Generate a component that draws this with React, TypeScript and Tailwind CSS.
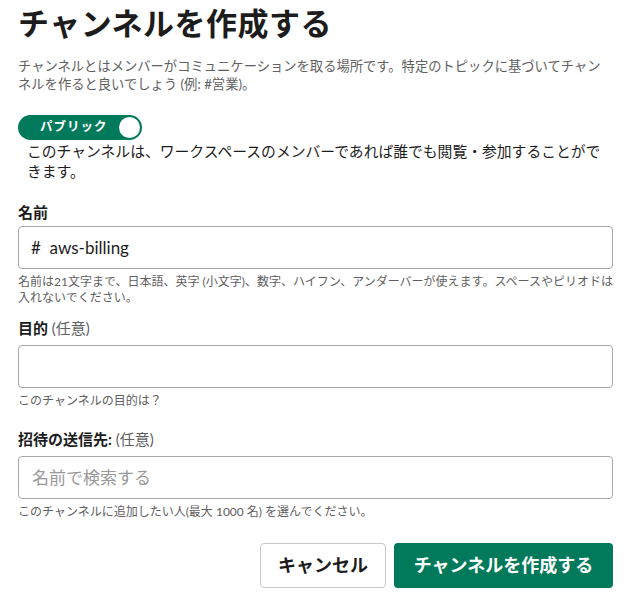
import React from "react";

const font = "font-['Lato','Noto_Sans_CJK_JP',sans-serif]";

function Field({
  label,
  optional,
  children,
  hint,
  className,
  inputGap = "mt-[3px]",
}: {
  label: string;
  optional?: boolean;
  children: React.ReactNode;
  hint: React.ReactNode;
  className?: string;
  inputGap?: string;
}) {
  return (
    <div className={className}>
      <div className="text-[15px] leading-[22px] text-[#1d1c1d]">
        <span className="font-bold">{label}</span>
        {optional && <span className="text-[#616061]"> (任意)</span>}
      </div>
      <div className={`${inputGap} h-[43px] rounded-[4px] border border-[#a8a8a8] flex items-center px-[12px] text-[17px]`}>
        {children}
      </div>
      <div className="mt-[5px] text-[12px] leading-[16px] text-[#616061]">{hint}</div>
    </div>
  );
}

export default function App() {
  return (
    <div className={`${font} w-[640px] h-[614px] bg-white text-[#1d1c1d] pl-[18px] pr-[27px] pt-[3px] overflow-hidden`}>
      {/* Title */}
      <h1 className="text-[31px] leading-[40px] font-bold tracking-[0.5px]">チャンネルを作成する</h1>

      <p className="mt-[14px] text-[13.3px] leading-[18px] text-[#616061]">
        チャンネルとはメンバーがコミュニケーションを取る場所です。特定のトピックに基づいてチャン
        <br />
        ネルを作ると良いでしょう (例: #営業)。
      </p>

      {/* Public toggle */}
      <div className="mt-[22px] w-[124px] h-[25px] rounded-full bg-[#007a5a] flex items-center justify-between pl-[22px] pr-[2px]">
        <span className="text-white text-[12.5px] font-bold tracking-[1px]">パブリック</span>
        <span className="w-[21px] h-[21px] rounded-full bg-white" />
      </div>
      <p className="mt-[1px] pl-[9px] text-[14.8px] leading-[20px] whitespace-nowrap">
        このチャンネルは、ワークスペースのメンバーであれば誰でも閲覧・参加することがで
        <br />
        きます。
      </p>

      <Field
        className="mt-[20px]"
        label="名前"
        hint={
          <>
            名前は21文字まで、日本語、英字 (小文字)、数字、ハイフン、アンダーバーが使えます。スペースやピリオドは
            <br />
            入れないでください。
          </>
        }
      >
        <span className="text-[#1d1c1d]">#&nbsp;&nbsp;aws-billing</span>
      </Field>

      <Field className="mt-[11px]" inputGap="mt-[6px]" label="目的" optional hint="このチャンネルの目的は？">
        <span />
      </Field>

      <Field
        className="mt-[19px]"
        inputGap="mt-[6px]"
        label="招待の送信先:"
        optional
        hint="このチャンネルに追加したい人(最大 1000 名) を選んでください。"
      >
        <span className="text-[#9a999a] pl-[1px]">名前で検索する</span>
      </Field>

      {/* Actions */}
      <div className="mt-[23px] flex justify-end gap-[8px]">
        <button className="w-[126px] h-[45px] rounded-[4px] border border-[#c8c8c8] bg-white text-[18px] font-bold text-[#1d1c1d]">
          キャンセル
        </button>
        <button className="w-[219px] h-[45px] rounded-[4px] bg-[#007a5a] text-[18px] font-bold text-white">
          チャンネルを作成する
        </button>
      </div>
    </div>
  );
}
